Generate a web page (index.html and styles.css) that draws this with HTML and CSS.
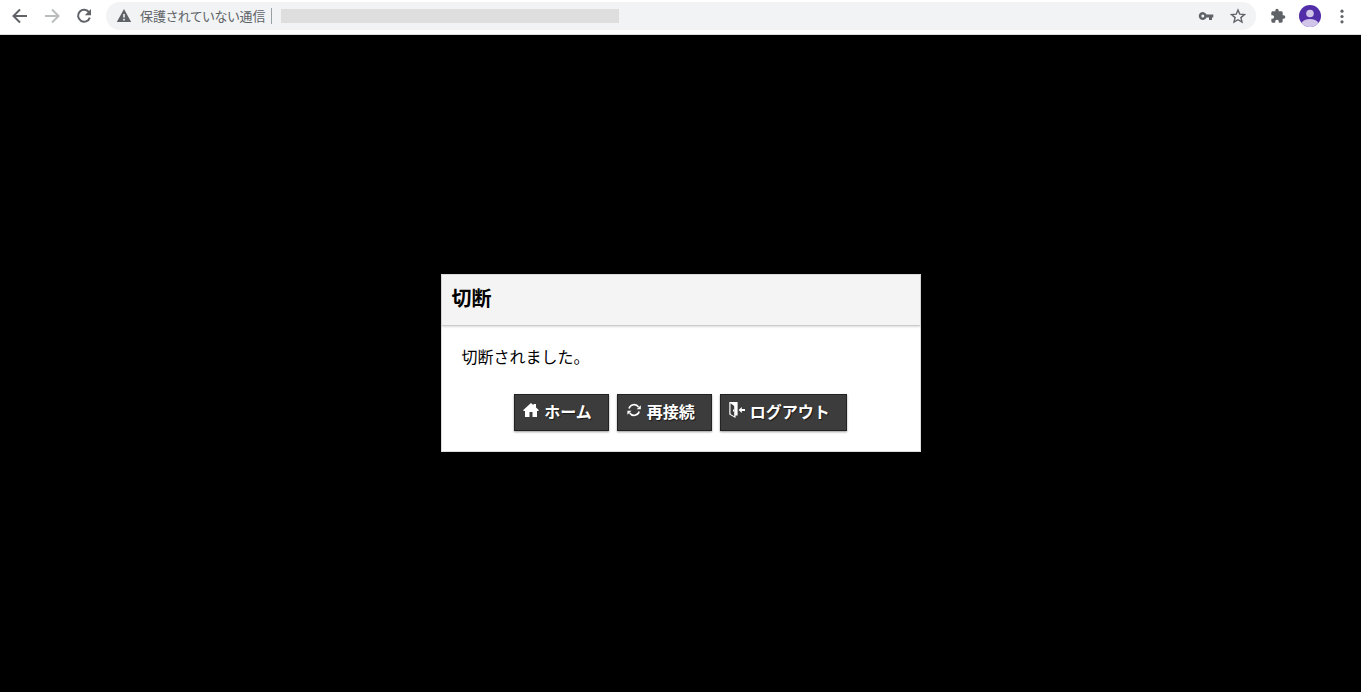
FILE: index.html
```html
<!DOCTYPE html>
<html lang="ja">
<head>
<meta charset="utf-8">
<title>切断</title>
<link rel="stylesheet" href="styles.css">
</head>
<body>
<header class="toolbar">
  <nav class="nav">
    <button class="tool" aria-label="戻る"><svg viewBox="0 0 16 16"><path d="M15 8H2M8 1.5L1.5 8L8 14.5" fill="none" stroke="#5f6368" stroke-width="2"/></svg></button>
    <button class="tool" aria-label="進む"><svg viewBox="0 0 16 16"><path d="M1 8H14M8 1.5L14.5 8L8 14.5" fill="none" stroke="#babcbe" stroke-width="2"/></svg></button>
    <button class="tool" aria-label="再読み込み"><svg viewBox="0 0 16 16"><path d="M13.2 4.6A6 6 0 1 0 13.8 9.6" fill="none" stroke="#5f6368" stroke-width="2"/><path d="M15 1V7.2H8.8z" fill="#5f6368"/></svg></button>
  </nav>
  <div class="address">
    <svg class="warning" viewBox="0 0 16 16"><path d="M8 1L15.2 14H.8zM7.2 6V9.6H8.8V6zM7.2 10.8V12.4H8.8V10.8z" fill="#5f6368" fill-rule="evenodd"/></svg>
    <span class="status">保護されていない通信</span>
    <span class="divider"></span>
    <span class="url"></span>
    <div class="actions">
      <button class="tool" aria-label="パスワード"><svg viewBox="0 0 16 16"><path d="M8.5 6.6A4 4 0 1 0 8.5 9.4H11V12H14V9.4H15.3V6.6zM4.8 6.5a1.5 1.5 0 1 1 0 3a1.5 1.5 0 0 1 0-3z" fill="#5f6368" fill-rule="evenodd"/></svg></button>
      <button class="tool" aria-label="ブックマーク"><svg viewBox="0 0 16 16"><path d="M8 2L9.8 6.2L14.4 6.6L10.9 9.6L12 14.1L8 11.7L4 14.1L5.1 9.6L1.6 6.6L6.2 6.2z" fill="none" stroke="#5f6368" stroke-width="1.4"/></svg></button>
    </div>
  </div>
  <div class="extras">
    <button class="tool" aria-label="拡張機能"><svg viewBox="0 0 24 24"><path d="M20.5 11H19V7c0-1.100-.9-2-2-2h-4V3.500a2.500 2.500 0 0 0-5 0V5H4c-1.100 0-2 .9-2 2v3.800h1.500a2.700 2.700 0 0 1 0 5.400H2V20c0 1.100.9 2 2 2h3.800v-1.500a2.700 2.700 0 0 1 5.400 0V22H17c1.100 0 2-.9 2-2v-4h1.500a2.500 2.500 0 0 0 0-5z" fill="#5f6368"/></svg></button>
    <button class="tool profile" aria-label="プロフィール"><svg viewBox="0 0 22 22"><circle cx="11" cy="11" r="11" fill="#512da8"/><circle cx="11" cy="8.500" r="3.800" fill="#d1c4e9"/><path d="M2.500 18C5 12.800 17 12.800 19.500 18A11 11 0 0 1 2.500 18z" fill="#d1c4e9"/></svg></button>
    <button class="tool" aria-label="メニュー"><svg viewBox="0 0 16 16"><g fill="#5f6368"><circle cx="8" cy="3.200" r="1.600"/><circle cx="8" cy="8.500" r="1.600"/><circle cx="8" cy="13.800" r="1.600"/></g></svg></button>
  </div>
</header>
<main class="screen">
  <section class="dialog" role="dialog" aria-labelledby="title">
    <div class="dialog-head"><h1 class="title" id="title">切断</h1></div>
    <div class="dialog-body">
      <p class="message">切断されました。</p>
      <div class="buttons">
        <button class="button"><svg class="icon" viewBox="0 0 16 16"><path d="M8 1L10.500 3.200V2H13V5.400L16 8.200L15 9H14V15H9.500V10H6.500V15H2V9H1L0 8.200z" fill="#fff"/></svg>ホーム</button>
        <button class="button"><svg class="icon" viewBox="0 0 16 16"><path d="M3 6.500A5.300 5.300 0 0 1 12.500 5M13.200 9.500A5.300 5.300 0 0 1 3.700 11" fill="none" stroke="#fff" stroke-width="1.600"/><path d="M14.800 3.200V7.300H10.700zM1.400 12.800V8.700H5.500z" fill="#fff"/></svg>再接続</button>
        <button class="button"><svg class="icon" viewBox="0 0 16 16"><path d="M.3 0H8.600V13.500H6.500V16L.3 12.600zM1.500 1.200V12L5.200 14.200V4z" fill="#fff" fill-rule="evenodd"/><path d="M4 7.500h1v2H4zM9.600 8L12.800 5V7H16V9H12.800V11z" fill="#fff"/></svg>ログアウト</button>
      </div>
    </div>
  </section>
</main>
</body>
</html>
```
FILE: styles.css
```css
* { box-sizing: border-box; }

body {
  margin: 0;
  min-height: 100vh;
  display: flex;
  flex-direction: column;
  background: #000;
  color: #000;
  font-family: "Noto Sans CJK JP", sans-serif;
}

.toolbar {
  display: flex;
  align-items: center;
  padding: 2px 11px 4px 12px;
  background: #fff;
  border-bottom: 1px solid #dadce0;
}

.nav, .actions, .extras {
  display: flex;
  align-items: center;
  gap: 16px;
}

.tool {
  display: block;
  width: 16px;
  height: 16px;
  padding: 0;
  border: 0;
  background: none;
}

.tool svg { display: block; width: 100%; height: 100%; }

.profile { width: 22px; height: 22px; }

.address {
  flex: 1;
  display: flex;
  align-items: center;
  height: 28px;
  margin: 0 14px;
  padding: 0 10px;
  border-radius: 14px;
  background: #f1f3f4;
}

.warning { width: 16px; height: 16px; margin-right: 8px; }

.status {
  color: #5f6368;
  font-size: 13px;
  line-height: 20px;
  font-feature-settings: "palt";
}

.divider { width: 1px; height: 16px; margin: 0 9px 0 6px; background: #9aa0a6; }

.url { flex: 0 1 338px; height: 14px; background: #dedede; }

.actions { margin-left: auto; }

.extras { gap: 13px; }

.screen {
  flex: 1;
  display: flex;
  align-items: center;
  justify-content: center;
  padding-bottom: 2px;
}

.dialog {
  width: 100%;
  max-width: 480px;
  background: #fff;
  border: 1px solid #ddd;
}

.dialog-head {
  padding: 8px 10px 12px;
  background: #f4f4f4;
  border-bottom: 1px solid #ccc;
  box-shadow: 0 1px 2px rgba(0, 0, 0, 0.15);
}

.title { margin: 0; font-size: 20px; line-height: 30px; }

.dialog-body { padding: 18px 20px 20px; }

.message { margin: 0 0 26px; font-size: 16px; line-height: 24px; }

.buttons { display: flex; justify-content: center; gap: 8px; }

.button {
  display: flex;
  align-items: flex-start;
  padding: 5px 16px 7px 8px;
  border: 1px solid #222;
  background: #3c3c3c;
  box-shadow: 0 1px 2px rgba(0, 0, 0, 0.4);
  color: #fff;
  font-family: inherit;
  font-size: 16px;
  font-weight: 700;
  line-height: 23px;
  text-shadow: 1px 1px 1px rgba(0, 0, 0, 0.6);
}

.icon { width: 16px; height: 16px; margin: 2px 5px 0 0; }
```
